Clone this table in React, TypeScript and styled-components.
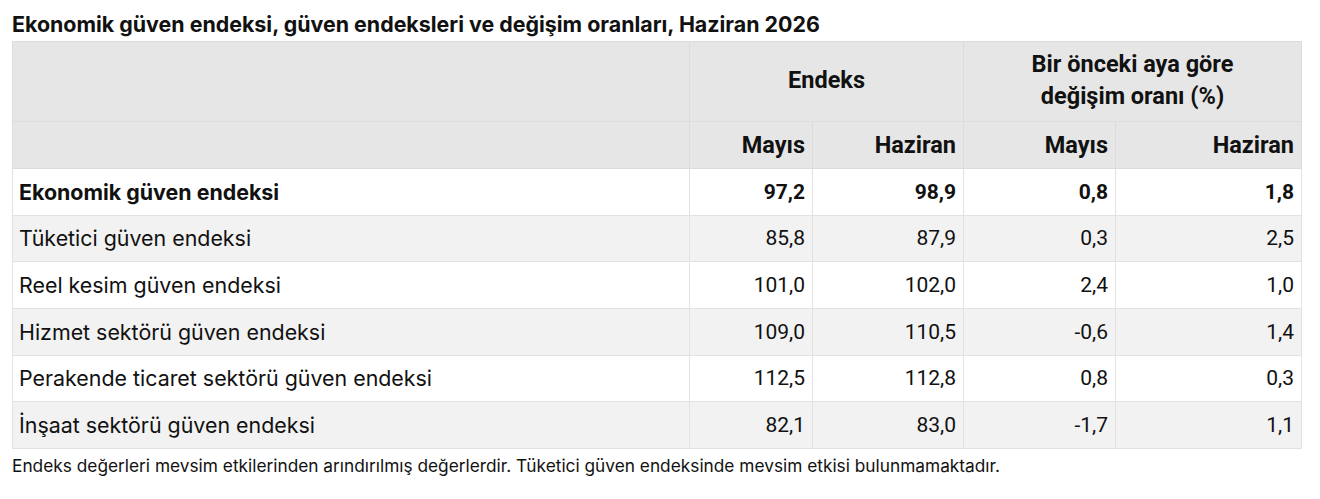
import React from "react";
import styled, { createGlobalStyle } from "styled-components";

const Global = createGlobalStyle`
  html, body { margin: 0; padding: 0; background: #fff; }
  body { font-family: Inter, "Noto Sans", sans-serif; color: #111; }
`;

const Wrap = styled.div`
  padding: 10px 19px 0 12px;
`;

const Title = styled.h2`
  margin: 0 0 3px;
  font-family: Inter, sans-serif;
  font-size: 21.4px;
  line-height: 28px;
  font-weight: 700;
  color: #111;
`;

const Table = styled.table`
  width: 1289px;
  border-collapse: collapse;
  table-layout: fixed;
  border: 1px solid #dedede;
`;

const HeadRow = styled.tr<{ $h: number }>`
  height: ${(p) => p.$h}px;
`;

const Th = styled.th<{ $align?: string; $lift?: boolean }>`
  background: #e6e6e6;
  border: 1px solid #dcdcdc;
  font-family: Roboto, sans-serif;
  font-weight: 700;
  font-size: 23.5px;
  line-height: 32px;
  color: #111;
  text-align: ${(p) => p.$align || "center"};
  padding: ${(p) => (p.$lift ? "4px 7px 8px" : "6px 7px")};
`;

const Row = styled.tr<{ $alt?: boolean }>`
  background: ${(p) => (p.$alt ? "#f2f2f2" : "#fff")};
  height: 46.67px;
`;

const Label = styled.td<{ $bold?: boolean }>`
  border: 1px solid #e2e2e2;
  padding: 0 6px;
  font-family: Inter, sans-serif;
  font-size: 21.4px;
  font-weight: ${(p) => (p.$bold ? 700 : 400)};
  color: #111;
`;

const Num = styled.td<{ $bold?: boolean }>`
  border: 1px solid #e2e2e2;
  padding: 0 7px;
  font-family: Roboto, sans-serif;
  font-size: 21px;
  font-weight: ${(p) => (p.$bold ? 700 : 400)};
  text-align: right;
  color: #111;
`;

const Note = styled.p`
  margin: 6px 0 0;
  font-family: Inter, sans-serif;
  font-size: 17.3px;
  color: #111;
`;

const rows: [string, string, string, string, string][] = [
  ["Tüketici güven endeksi", "85,8", "87,9", "0,3", "2,5"],
  ["Reel kesim güven endeksi", "101,0", "102,0", "2,4", "1,0"],
  ["Hizmet sektörü güven endeksi", "109,0", "110,5", "-0,6", "1,4"],
  ["Perakende ticaret sektörü güven endeksi", "112,5", "112,8", "0,8", "0,3"],
  ["İnşaat sektörü güven endeksi", "82,1", "83,0", "-1,7", "1,1"],
];

export default function App() {
  return (
    <Wrap>
      <Global />
      <Title>Ekonomik güven endeksi, güven endeksleri ve değişim oranları, Haziran 2026</Title>
      <Table>
        <colgroup>
          <col style={{ width: 677 }} />
          <col style={{ width: 123 }} />
          <col style={{ width: 151 }} />
          <col style={{ width: 152 }} />
          <col style={{ width: 186 }} />
        </colgroup>
        <thead>
          <HeadRow $h={80}>
            <Th $lift />
            <Th $lift colSpan={2}>
              Endeks
            </Th>
            <Th $lift colSpan={2}>
              Bir önceki aya göre
              <br />
              değişim oranı (%)
            </Th>
          </HeadRow>
          <HeadRow $h={47}>
            <Th />
            <Th $align="right">Mayıs</Th>
            <Th $align="right">Haziran</Th>
            <Th $align="right">Mayıs</Th>
            <Th $align="right">Haziran</Th>
          </HeadRow>
        </thead>
        <tbody>
          <Row>
            <Label $bold>Ekonomik güven endeksi</Label>
            <Num $bold>97,2</Num>
            <Num $bold>98,9</Num>
            <Num $bold>0,8</Num>
            <Num $bold>1,8</Num>
          </Row>
          {rows.map((r, i) => (
            <Row key={r[0]} $alt={i % 2 === 0}>
              <Label>{r[0]}</Label>
              <Num>{r[1]}</Num>
              <Num>{r[2]}</Num>
              <Num>{r[3]}</Num>
              <Num>{r[4]}</Num>
            </Row>
          ))}
        </tbody>
      </Table>
      <Note>
        Endeks değerleri mevsim etkilerinden arındırılmış değerlerdir. Tüketici güven endeksinde mevsim etkisi
        bulunmamaktadır.
      </Note>
    </Wrap>
  );
}
